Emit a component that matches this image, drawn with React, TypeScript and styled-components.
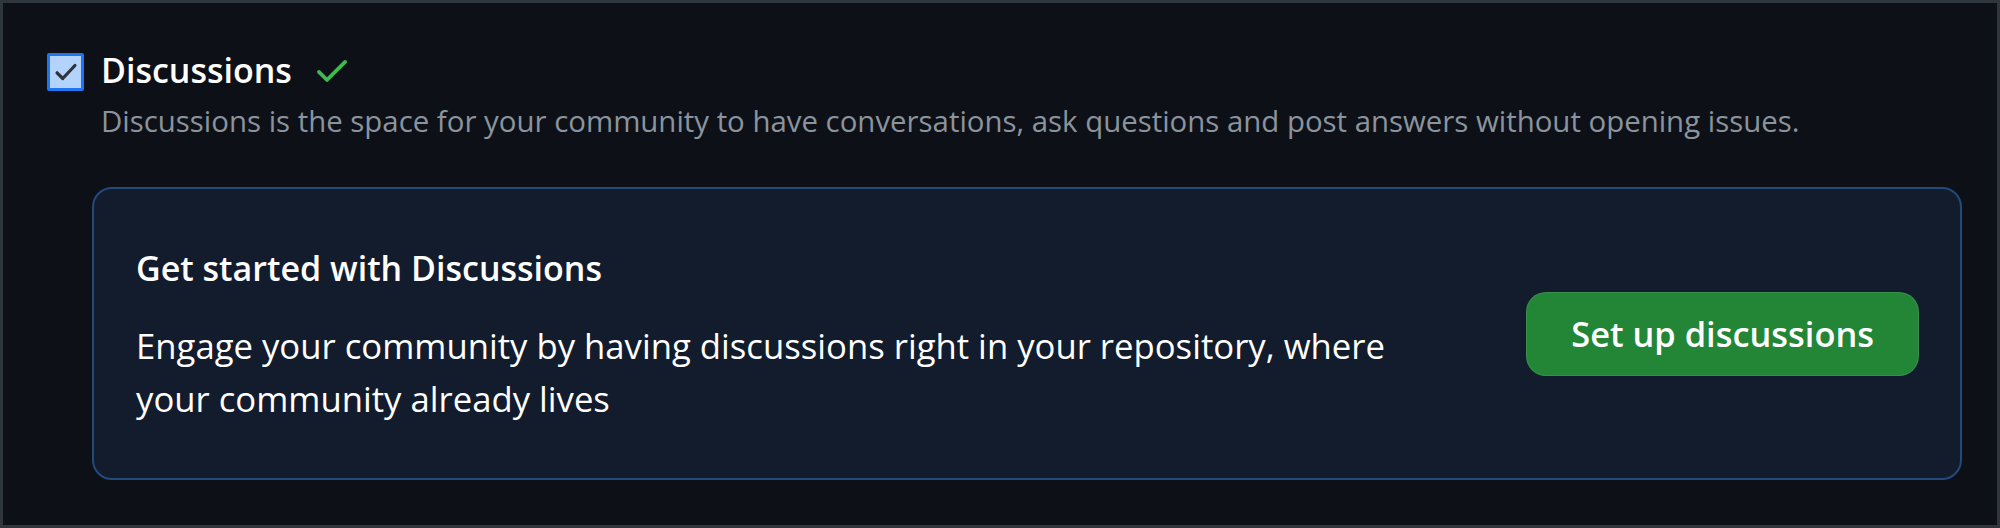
import React from 'react'
import styled, { createGlobalStyle } from 'styled-components'

const GlobalStyle = createGlobalStyle`
  html, body {
    margin: 0;
    padding: 0;
    background: #0d1117;
  }
  * {
    box-sizing: border-box;
  }
`

const Page = styled.div`
  height: 528px;
  border: 3px solid #30363d;
  background: #0d1117;
  padding: 47px 35px 0 44px;
  font-family: 'Open Sans', 'Noto Sans', sans-serif;
  color: #e6edf3;
`

const Header = styled.div`
  display: flex;
  align-items: flex-start;
  gap: 17px;
`

const CheckBox = styled.div`
  flex: none;
  width: 37px;
  height: 38px;
  margin-top: 3px;
  border: 3px solid #1f74f0;
  border-radius: 2px;
  background: #b3d3fd;
  display: flex;
  align-items: center;
  justify-content: center;
`

const HeaderText = styled.div`
  display: flex;
  flex-direction: column;
`

const TitleRow = styled.div`
  display: flex;
  align-items: center;
  gap: 20px;
`

const Title = styled.span`
  font-size: 34px;
  font-weight: 600;
  line-height: 40px;
  color: #ffffff;
`

const Description = styled.p`
  margin: 10px 0 0;
  font-size: 29.4px;
  line-height: 43px;
  color: #8b949e;
`

const Callout = styled.div`
  margin: 44px 0 0 45px;
  height: 293px;
  border: 2px solid #224a7c;
  border-radius: 20px;
  background: #121c2d;
  padding: 0 41px 0 42px;
  display: flex;
  align-items: center;
  justify-content: space-between;
`

const CalloutText = styled.div`
  max-width: 1285px;
`

const CalloutTitle = styled.h3`
  margin: 0;
  font-size: 34px;
  font-weight: 600;
  line-height: 53px;
  color: #ffffff;
`

const CalloutBody = styled.p`
  margin: 24px 0 0;
  font-size: 34.7px;
  line-height: 53px;
  color: #ffffff;
`

const GreenButton = styled.button`
  flex: none;
  height: 84px;
  padding: 0 44px;
  border: 1px solid rgba(240, 246, 252, 0.1);
  border-radius: 20px;
  background: #238636;
  color: #ffffff;
  font-family: inherit;
  font-size: 34.4px;
  font-weight: 600;
  cursor: pointer;
`

const App = (): JSX.Element => {
  return (
    <>
      <GlobalStyle />
      <Page>
        <Header>
          <CheckBox>
            <svg width="26" height="26" viewBox="0 0 16 16">
              <path
                d="M2.5 8.5 L6 12 L13.5 4"
                fill="none"
                stroke="#2f343b"
                strokeWidth="2"
                strokeLinecap="round"
                strokeLinejoin="round"
              />
            </svg>
          </CheckBox>
          <HeaderText>
            <TitleRow>
              <Title>Discussions</Title>
              <svg width="40" height="40" viewBox="0 0 16 16" fill="#3fb950">
                <path d="M13.78 4.22a.75.75 0 0 1 0 1.06l-7.25 7.25a.75.75 0 0 1-1.06 0L2.22 9.28a.751.751 0 0 1 .018-1.042.751.751 0 0 1 1.042-.018L6 10.94l6.72-6.72a.75.75 0 0 1 1.06 0Z" />
              </svg>
            </TitleRow>
            <Description>
              Discussions is the space for your community to have conversations, ask questions and post answers without opening issues.
            </Description>
          </HeaderText>
        </Header>
        <Callout>
          <CalloutText>
            <CalloutTitle>Get started with Discussions</CalloutTitle>
            <CalloutBody>
              Engage your community by having discussions right in your repository, where your community already lives
            </CalloutBody>
          </CalloutText>
          <GreenButton>Set up discussions</GreenButton>
        </Callout>
      </Page>
    </>
  )
}

export default App
